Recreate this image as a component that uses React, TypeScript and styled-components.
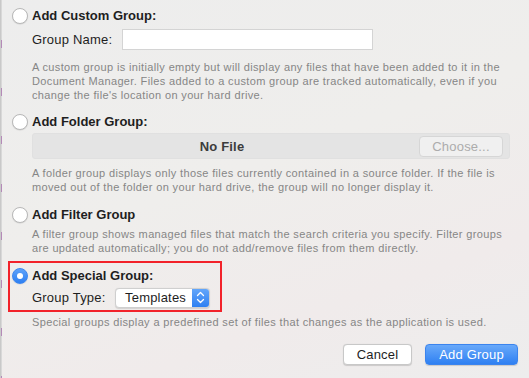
import styled, { createGlobalStyle } from "styled-components";

const GlobalStyle = createGlobalStyle`
  html, body {
    margin: 0;
    padding: 0;
  }
  body {
    font-family: "Liberation Sans", Arial, sans-serif;
    -webkit-font-smoothing: antialiased;
  }
`;

const Sheet = styled.div`
  position: relative;
  width: 529px;
  height: 378px;
  box-sizing: border-box;
  padding: 8px 11px 0 11px;
  display: flex;
  flex-direction: column;
  background: linear-gradient(160deg, #ededed 0%, #efeeec 45%, #f0ebeb 75%, #ededed 100%);
  border-left: 1px solid #c9c9c9;
  color: #1f1f1f;
  overflow: hidden;
`;

const EdgeStrip = styled.div`
  position: absolute;
  left: -1px;
  top: 0;
  bottom: 0;
  width: 2px;
  background: repeating-linear-gradient(
    180deg,
    #d8d8d8 0px,
    #d8d8d8 40px,
    #b48ab8 40px,
    #b48ab8 48px
  );
`;

const Option = styled.section<{ $gap?: number }>`
  display: flex;
  flex-direction: column;
  margin-top: ${(p) => p.$gap ?? 0}px;
`;

const RadioRow = styled.label`
  display: flex;
  align-items: center;
  gap: 4px;
  height: 16px;
`;

const Radio = styled.span<{ $checked?: boolean }>`
  width: 16px;
  height: 16px;
  box-sizing: border-box;
  border-radius: 50%;
  flex-shrink: 0;
  display: flex;
  align-items: center;
  justify-content: center;
  background: ${(p) =>
    p.$checked ? "linear-gradient(180deg, #5ea2f9, #2d7ff2)" : "#ffffff"};
  border: 1px solid ${(p) => (p.$checked ? "#3b86f0" : "#b8b8b8")};
  box-shadow: 0 0.5px 1px rgba(0, 0, 0, 0.12);

  &::after {
    content: "";
    display: ${(p) => (p.$checked ? "block" : "none")};
    width: 6px;
    height: 6px;
    border-radius: 50%;
    background: #ffffff;
  }
`;

const Heading = styled.span`
  font-size: 13px;
  font-weight: bold;
  line-height: 16px;
  color: #1e1e1e;
`;

const Body = styled.div<{ $top?: number }>`
  padding-left: 20px;
  margin-top: ${(p) => p.$top ?? 0}px;
`;

const FieldRow = styled.div`
  display: flex;
  align-items: center;
  height: 21px;
`;

const FieldLabel = styled.span<{ $width: number }>`
  width: ${(p) => p.$width}px;
  font-size: 13px;
  letter-spacing: 0.2px;
  color: #1e1e1e;
  flex-shrink: 0;
`;

const TextInput = styled.div`
  width: 251px;
  height: 21px;
  box-sizing: border-box;
  background: #ffffff;
  border: 1px solid #d4d4d4;
`;

const Description = styled.p<{ $top?: number }>`
  margin: ${(p) => p.$top ?? 0}px 0 0;
  font-size: 11px;
  line-height: 14px;
  letter-spacing: 0.36px;
  white-space: nowrap;
  color: #868686;
`;

const FileBar = styled.div`
  margin-top: 3px;
  width: 478px;
  height: 26px;
  box-sizing: border-box;
  border-radius: 3px;
  background: #e4e4e4;
  border: 1px solid #e0e0e0;
  display: flex;
  align-items: center;
  padding-right: 6px;
`;

const NoFile = styled.span`
  flex: 1;
  text-align: center;
  font-size: 13px;
  font-weight: bold;
  letter-spacing: 0.2px;
  color: #3c3c3c;
  padding-right: 8px;
`;

const PushButton = styled.button<{ $primary?: boolean; $disabled?: boolean; $width: number }>`
  width: ${(p) => p.$width}px;
  height: 21px;
  box-sizing: border-box;
  border-radius: 4px;
  font-family: inherit;
  font-size: 13px;
  letter-spacing: 0.2px;
  padding: 0;
  cursor: default;
  color: ${(p) => (p.$primary ? "#ffffff" : p.$disabled ? "#acacac" : "#1e1e1e")};
  background: ${(p) =>
    p.$primary
      ? "linear-gradient(180deg, #68a9fa 0%, #2f80f2 100%)"
      : p.$disabled
      ? "#f0f0f0"
      : "#ffffff"};
  border: 1px solid
    ${(p) => (p.$primary ? "#3b84ee" : p.$disabled ? "#d6d6d6" : "#c8c8c8")};
  box-shadow: ${(p) => (p.$disabled ? "none" : "0 0.5px 1px rgba(0,0,0,0.15)")};
`;

const HighlightBox = styled.div`
  margin: 6px 0 0 -4px;
  width: 214px;
  height: 51px;
  box-sizing: border-box;
  border: 2px solid #f2222a;
  padding: 5px 0 0 2px;
  display: flex;
  flex-direction: column;
`;

const PopUp = styled.div`
  width: 95px;
  height: 20px;
  box-sizing: border-box;
  display: flex;
  border-radius: 4px;
  background: #ffffff;
  border: 1px solid #cfcfcf;
  box-shadow: 0 0.5px 1px rgba(0, 0, 0, 0.12);
  overflow: hidden;
`;

const PopUpValue = styled.span`
  flex: 1;
  font-size: 13px;
  line-height: 18px;
  letter-spacing: 0.2px;
  padding-left: 9px;
  color: #1e1e1e;
`;

const Stepper = styled.span`
  width: 17px;
  display: flex;
  align-items: center;
  justify-content: center;
  background: linear-gradient(180deg, #63a6fa 0%, #2e80f2 100%);
`;

const Footer = styled.div`
  margin-top: 15px;
  display: flex;
  justify-content: flex-end;
  gap: 13px;
`;

const Chevrons = () => (
  <svg width="9" height="13" viewBox="0 0 9 13" fill="none">
    <path d="M1.5 4.5 L4.5 1.5 L7.5 4.5" stroke="#fff" strokeWidth="1.3" strokeLinecap="round" strokeLinejoin="round" />
    <path d="M1.5 8.5 L4.5 11.5 L7.5 8.5" stroke="#fff" strokeWidth="1.3" strokeLinecap="round" strokeLinejoin="round" />
  </svg>
);

export default function App() {
  return (
    <>
      <GlobalStyle />
      <Sheet>
        <EdgeStrip />
        <Option>
          <RadioRow>
            <Radio />
            <Heading>Add Custom Group:</Heading>
          </RadioRow>
          <Body $top={5}>
            <FieldRow>
              <FieldLabel $width={90}>Group Name:</FieldLabel>
              <TextInput />
            </FieldRow>
            <Description $top={10}>
              A custom group is initially empty but will display any files that have been added to it in the
              <br />
              Document Manager. Files added to a custom group are tracked automatically, even if you
              <br />
              change the file's location on your hard drive.
            </Description>
          </Body>
        </Option>

        <Option $gap={12}>
          <RadioRow>
            <Radio />
            <Heading>Add Folder Group:</Heading>
          </RadioRow>
          <Body>
            <FileBar>
              <NoFile>No File</NoFile>
              <PushButton $disabled $width={84}>Choose...</PushButton>
            </FileBar>
            <Description $top={7}>
              A folder group displays only those files currently contained in a source folder. If the file is
              <br />
              moved out of the folder on your hard drive, the group will no longer display it.
            </Description>
          </Body>
        </Option>

        <Option $gap={13}>
          <RadioRow>
            <Radio />
            <Heading>Add Filter Group</Heading>
          </RadioRow>
          <Body>
            <Description $top={4}>
              A filter group shows managed files that match the search criteria you specify. Filter groups
              <br />
              are updated automatically; you do not add/remove files from them directly.
            </Description>
          </Body>
        </Option>

        <HighlightBox>
          <RadioRow>
            <Radio $checked />
            <Heading>Add Special Group:</Heading>
          </RadioRow>
          <Body $top={3}>
            <FieldRow>
              <FieldLabel $width={83}>Group Type:</FieldLabel>
              <PopUp>
                <PopUpValue>Templates</PopUpValue>
                <Stepper>
                  <Chevrons />
                </Stepper>
              </PopUp>
            </FieldRow>
          </Body>
        </HighlightBox>

        <Body>
          <Description $top={3}>
            Special groups display a predefined set of files that changes as the application is used.
          </Description>
        </Body>

        <Footer>
          <PushButton $width={69}>Cancel</PushButton>
          <PushButton $primary $width={93}>Add Group</PushButton>
        </Footer>
      </Sheet>
    </>
  );
}
